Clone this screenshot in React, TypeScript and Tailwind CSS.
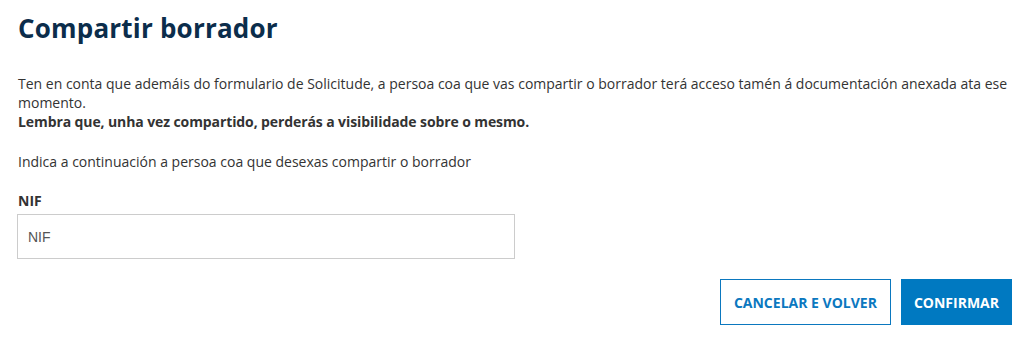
import React from "react";

export default function App() {
  return (
    <div className="w-[1031px] h-[346px] bg-white px-[18px] pt-[8px] text-[#333] font-['Open_Sans',sans-serif]">
      <h1 className="text-[26px] leading-[40px] font-bold text-[#0b2d4b] tracking-[0.2px]">Compartir borrador</h1>
      <div className="mt-[26px] text-[14px] leading-[19px]">
        <p>
          Ten en conta que ademáis do formulario de Solicitude, a persoa coa que vas compartir o borrador terá acceso tamén á documentación anexada ata ese momento.
        </p>
        <p className="font-bold tracking-[-0.1px]">Lembra que, unha vez compartido, perderás a visibilidade sobre o mesmo.</p>
        <p className="mt-[21px]">Indica a continuación a persoa coa que desexas compartir o borrador</p>
      </div>
      <label className="block mt-[20px] text-[14px] leading-[19px] font-bold">NIF</label>
      <input
        placeholder="NIF"
        className="mt-[4px] -ml-[1px] block w-[498px] h-[45px] border border-[#cccccc] px-[10px] text-[14px] font-['Liberation_Sans',sans-serif] placeholder:text-[#555] outline-none"
      />
      <div className="flex justify-end gap-[10px] mt-[20px] pr-[1px]">
        <button className="h-[46px] px-[13px] border border-[#0b78bf] text-[#0b78bf] text-[14px] font-bold">CANCELAR E VOLVER</button>
        <button className="h-[46px] px-[13px] bg-[#0079c1] text-white text-[14px] font-bold">CONFIRMAR</button>
      </div>
    </div>
  );
}
